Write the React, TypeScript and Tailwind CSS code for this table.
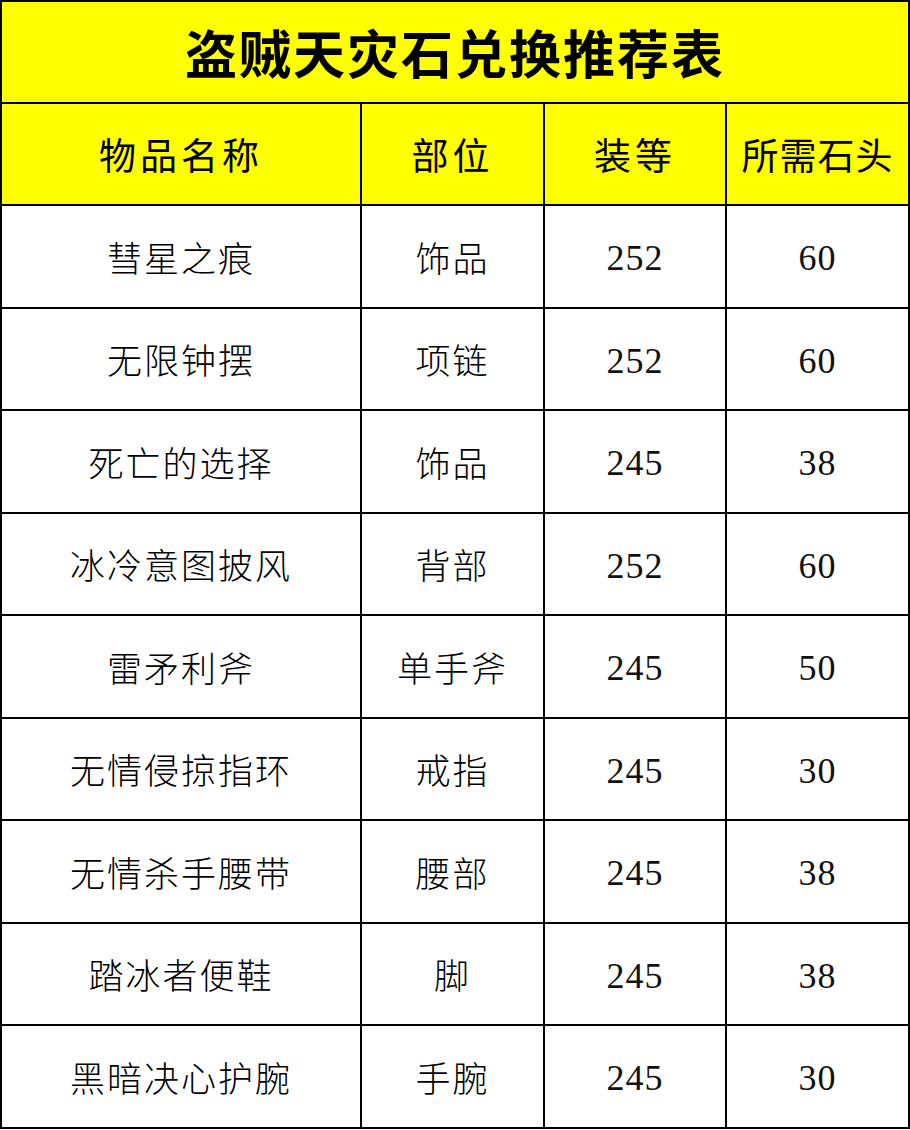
const headers = [
  { label: "物品名称", track: "tracking-[4px]" },
  { label: "部位", track: "tracking-[4px]" },
  { label: "装等", track: "tracking-[4px]" },
  { label: "所需石头", track: "tracking-[1px]" },
];

const rows = [
  ["彗星之痕", "饰品", "252", "60"],
  ["无限钟摆", "项链", "252", "60"],
  ["死亡的选择", "饰品", "245", "38"],
  ["冰冷意图披风", "背部", "252", "60"],
  ["雷矛利斧", "单手斧", "245", "50"],
  ["无情侵掠指环", "戒指", "245", "30"],
  ["无情杀手腰带", "腰部", "245", "38"],
  ["踏冰者便鞋", "脚", "245", "38"],
  ["黑暗决心护腕", "手腕", "245", "30"],
];

const cjk = "font-['Noto_Sans_CJK_SC','Noto_Sans',sans-serif]";
const num = "font-['Liberation_Serif','DejaVu_Serif',serif]";

export default function App() {
  return (
    <div className="w-[910px] h-[1130px] bg-white overflow-hidden">
      <div className="border-l-2 border-t-2 border-black">
        <div className="h-[102px] bg-[#ffff00] border-r-2 border-b-2 border-black flex items-center justify-center">
          <span className={`${cjk} text-[52px] font-bold tracking-[2px] text-black leading-none`}>
            盗贼天灾石兑换推荐表
          </span>
        </div>
        <div className="grid grid-cols-[360px_183px_182px_183px]">
          {headers.map((h) => (
            <div
              key={h.label}
              className="h-[102px] bg-[#ffff00] border-r-2 border-b-2 border-black flex items-center justify-center"
            >
              <span className={`${cjk} text-[37px] ${h.track} text-black leading-none`}>
                {h.label}
              </span>
            </div>
          ))}
          {rows.map((r) =>
            r.map((cell, i) => (
              <div
                key={r[0] + i}
                className="h-[102.5px] bg-white border-r-2 border-b-2 border-black flex items-center justify-center"
              >
                <span
                  className={
                    i < 2
                      ? `${cjk} text-[35px] font-light tracking-[2px] text-black leading-none`
                      : `${num} text-[36px] tracking-[1px] text-[#111] leading-none pt-[4px]`
                  }
                >
                  {cell}
                </span>
              </div>
            ))
          )}
        </div>
      </div>
    </div>
  );
}
